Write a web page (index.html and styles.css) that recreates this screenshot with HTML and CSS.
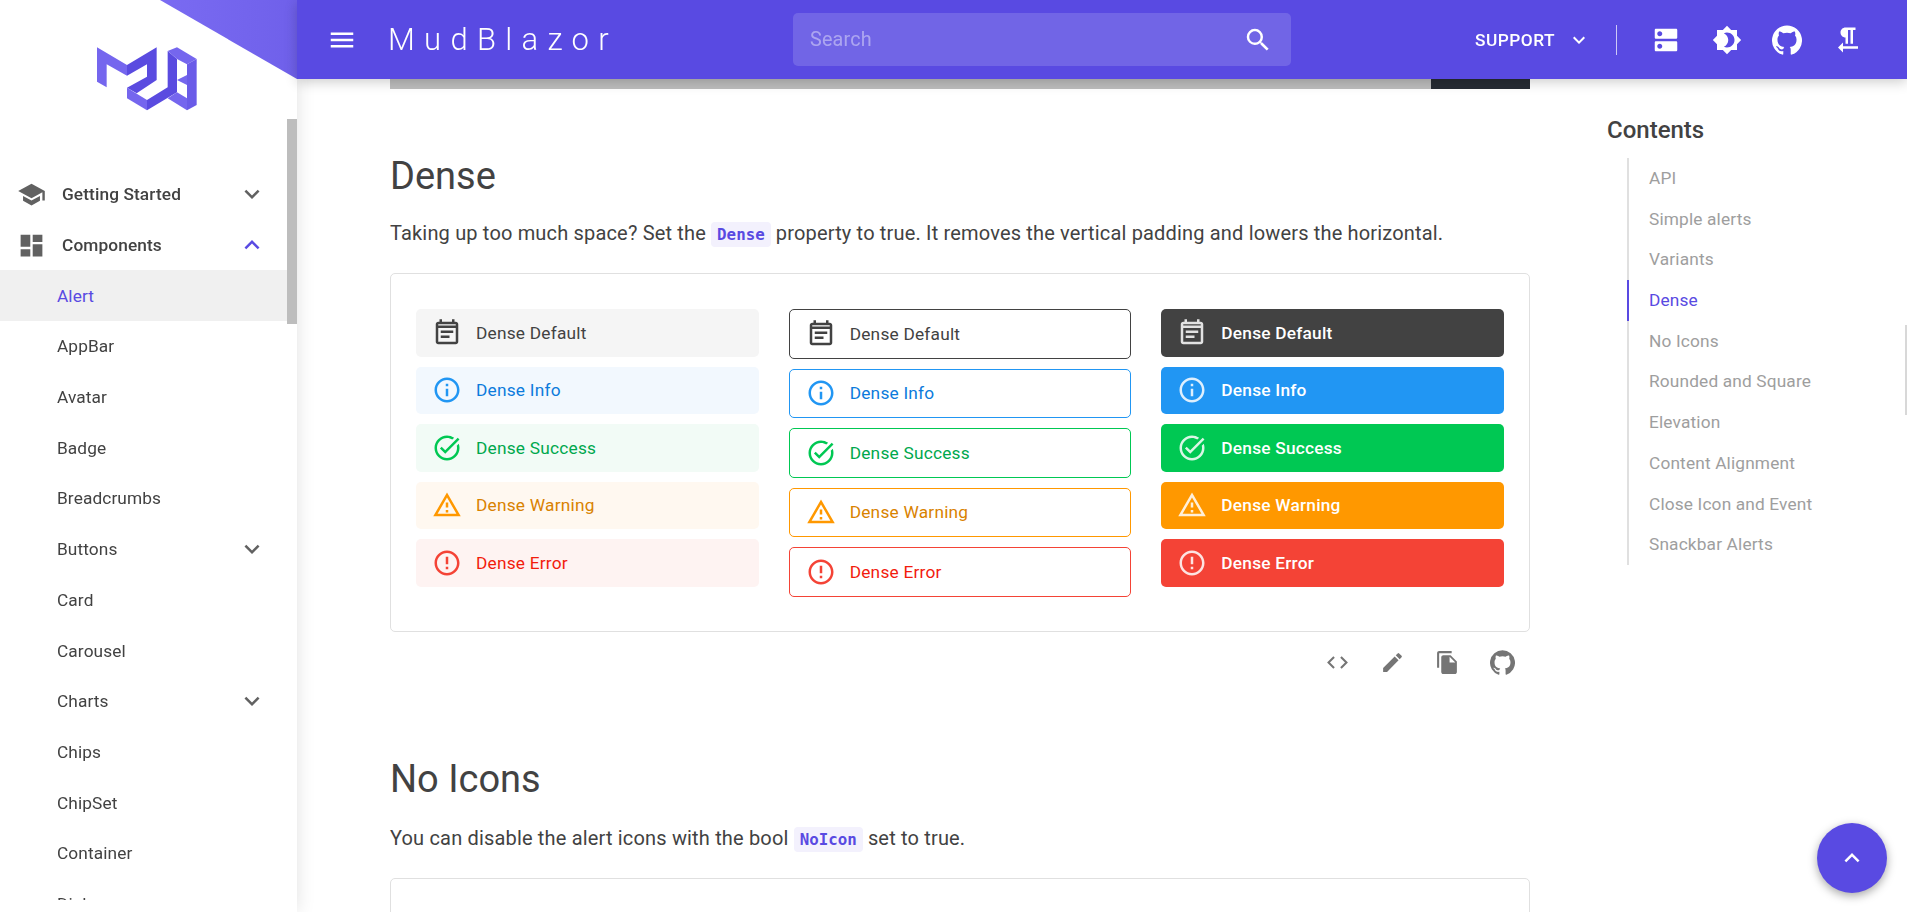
FILE: index.html
```html
<!DOCTYPE html>
<html lang="en">
<head>
    <meta charset="UTF-8">
    <title>Alert - MudBlazor</title>
    <link rel="stylesheet" href="styles.css">
</head>
<body>
    <svg class="defs" width="0" height="0">
        <defs>
            <symbol id="i-note" viewBox="0 0 24 24"><path d="M17 10H7v2h10v-2zm2-7h-1V1h-2v2H8V1H6v2H5c-1.11 0-1.99.9-1.99 2L3 19c0 1.1.89 2 2 2h14c1.1 0 2-.9 2-2V5c0-1.1-.9-2-2-2zm0 16H5V8h14v11zM5 6V5h14v1H5zm2 8h7v2H7v-2z"/></symbol>
            <symbol id="i-info" viewBox="0 0 24 24"><path d="M11 7h2v2h-2zm0 4h2v6h-2zm1-9C6.48 2 2 6.48 2 12s4.48 10 10 10 10-4.48 10-10S17.52 2 12 2zm0 18c-4.41 0-8-3.59-8-8s3.59-8 8-8 8 3.59 8 8-3.59 8-8 8z"/></symbol>
            <symbol id="i-check" viewBox="0 0 24 24"><path d="M22 5.18 10.59 16.6l-4.24-4.24 1.41-1.41 2.83 2.83 10-10L22 5.18zm-2.21 5.04c.13.57.21 1.17.21 1.78 0 4.42-3.58 8-8 8s-8-3.58-8-8 3.58-8 8-8c1.58 0 3.04.46 4.28 1.25l1.44-1.44A9.9 9.9 0 0 0 12 2C6.48 2 2 6.48 2 12s4.48 10 10 10 10-4.48 10-10c0-1.19-.22-2.33-.6-3.39l-1.61 1.61z"/></symbol>
            <symbol id="i-warn" viewBox="0 0 24 24"><path d="M12 5.99 19.53 19H4.47L12 5.99M12 2 1 21h22L12 2zm1 14h-2v2h2v-2zm0-6h-2v4h2v-4z"/></symbol>
            <symbol id="i-error" viewBox="0 0 24 24"><path d="M11 15h2v2h-2zm0-8h2v6h-2zm.99-5C6.47 2 2 6.48 2 12s4.47 10 9.99 10C17.52 22 22 17.52 22 12S17.52 2 11.99 2zM12 20c-4.42 0-8-3.58-8-8s3.58-8 8-8 8 3.58 8 8-3.58 8-8 8z"/></symbol>
            <symbol id="i-github" viewBox="0 0 24 24"><path d="M12 .3a12 12 0 0 0-3.8 23.38c.6.12.83-.26.83-.57l-.01-2.23c-3.34.72-4.04-1.4-4.04-1.4-.55-1.39-1.34-1.76-1.34-1.76-1.08-.74.09-.73.09-.73 1.2.09 1.84 1.24 1.84 1.24 1.07 1.83 2.81 1.3 3.5 1 .1-.78.42-1.31.76-1.61-2.67-.3-5.47-1.33-5.47-5.93 0-1.31.47-2.38 1.24-3.22-.14-.3-.54-1.52.1-3.18 0 0 1-.32 3.3 1.23a11.5 11.5 0 0 1 6 0c2.28-1.55 3.29-1.23 3.29-1.23.64 1.66.24 2.88.12 3.18a4.65 4.65 0 0 1 1.23 3.22c0 4.61-2.8 5.63-5.48 5.92.42.36.81 1.1.81 2.22l-.01 3.29c0 .31.2.69.82.57A12 12 0 0 0 12 .3"/></symbol>
            <symbol id="i-down" viewBox="0 0 24 24"><path d="M7.41 8.59 12 13.17l4.59-4.58L18 10l-6 6-6-6 1.41-1.41z"/></symbol>
            <symbol id="i-up" viewBox="0 0 24 24"><path d="M7.41 15.41 12 10.83l4.59 4.58L18 14l-6-6-6 6z"/></symbol>
        </defs>
    </svg>

    <header class="appbar">
        <svg class="hamburger" viewBox="0 0 24 24"><path d="M3 18h18v-2H3v2zm0-5h18v-2H3v2zm0-7v2h18V6H3z"/></svg>
        <div class="brand">MudBlazor</div>
        <div class="search">
            <span>Search</span>
            <svg viewBox="0 0 24 24"><path d="M15.5 14h-.79l-.28-.27A6.47 6.47 0 0 0 16 9.5 6.5 6.5 0 1 0 9.5 16c1.61 0 3.09-.59 4.23-1.57l.27.28v.79l5 4.99L20.49 19l-4.99-5zm-6 0C7.01 14 5 11.99 5 9.5S7.01 5 9.5 5 14 7.01 14 9.5 11.99 14 9.5 14z"/></svg>
        </div>
        <div class="appbar-right">
            <div class="support">SUPPORT</div>
            <svg class="support-arrow" viewBox="0 0 24 24"><use href="#i-down"/></svg>
            <div class="bar-divider"></div>
            <svg class="bar-icon" viewBox="0 0 24 24"><path d="M20 13H4c-.55 0-1 .45-1 1v6c0 .55.45 1 1 1h16c.55 0 1-.45 1-1v-6c0-.55-.45-1-1-1zM7 19c-1.1 0-2-.9-2-2s.9-2 2-2 2 .9 2 2-.9 2-2 2zM20 3H4c-.55 0-1 .45-1 1v6c0 .55.45 1 1 1h16c.55 0 1-.45 1-1V4c0-.55-.45-1-1-1zM7 9c-1.1 0-2-.9-2-2s.9-2 2-2 2 .9 2 2-.9 2-2 2z"/></svg>
            <svg class="bar-icon" viewBox="0 0 24 24"><path d="M20 8.69V4h-4.69L12 .69 8.69 4H4v4.69L.69 12 4 15.31V20h4.69L12 23.31 15.31 20H20v-4.69L23.31 12 20 8.69zM12 18c-.89 0-1.74-.2-2.5-.55C11.56 16.5 13 14.42 13 12s-1.44-4.5-3.5-5.45C10.26 6.2 11.11 6 12 6c3.31 0 6 2.69 6 6s-2.69 6-6 6z"/></svg>
            <svg class="bar-icon" viewBox="0 0 24 24"><use href="#i-github"/></svg>
            <svg class="bar-icon" viewBox="0 0 24 24"><path d="M10 10v5h2V4h2v11h2V4h2V2h-8C7.79 2 6 3.79 6 6s1.79 4 4 4zm-2 7v-3l-4 4 4 4v-3h12v-2H8z"/></svg>
        </div>
    </header>

    <aside class="sidebar">
        <div class="corner"></div>
        <svg class="logo" viewBox="0 0 360 270">
            <polygon class="logo-light" points="36,37 126,90 126,122 65,88 65,157 36,140"/>
            <polygon class="logo-dark" points="126,90 215,37 215,135 155,175 126,158 186,125 186,88 126,122"/>
            <polygon class="logo-light" points="126,158 186,195 186,226 126,190"/>
            <polygon class="logo-dark" points="186,195 248,157 248,48 276,72 276,172 186,226"/>
            <polygon class="logo-light" points="248,48 276,37 335,72 306,88 276,72"/>
            <polygon class="logo-mid" points="306,88 335,72 335,210 306,226"/>
            <polygon class="logo-light" points="276,135 306,120 306,150"/>
            <polygon class="logo-light" points="276,172 306,190 306,226 248,190"/>
        </svg>
        <div class="nav-wrap">
            <nav class="nav">
                <div class="nav-group">
                    <svg class="nav-icon" viewBox="0 0 24 24"><path d="M5 13.18v4L12 21l7-3.82v-4L12 17l-7-3.82zM12 3 1 9l11 6 9-4.91V17h2V9L12 3z"/></svg>
                    <span>Getting Started</span>
                    <svg class="chev" viewBox="0 0 24 24"><use href="#i-down"/></svg>
                </div>
                <div class="nav-group">
                    <svg class="nav-icon" viewBox="0 0 24 24"><path d="M3 13h8V3H3v10zm0 8h8v-6H3v6zm10 0h8V11h-8v10zm0-18v6h8V3h-8z"/></svg>
                    <span>Components</span>
                    <svg class="chev chev-open" viewBox="0 0 24 24"><use href="#i-up"/></svg>
                </div>
                <div class="nav-item nav-active">Alert</div>
                <div class="nav-item">AppBar</div>
                <div class="nav-item">Avatar</div>
                <div class="nav-item">Badge</div>
                <div class="nav-item">Breadcrumbs</div>
                <div class="nav-item">Buttons<svg class="chev" viewBox="0 0 24 24"><use href="#i-down"/></svg></div>
                <div class="nav-item">Card</div>
                <div class="nav-item">Carousel</div>
                <div class="nav-item">Charts<svg class="chev" viewBox="0 0 24 24"><use href="#i-down"/></svg></div>
                <div class="nav-item">Chips</div>
                <div class="nav-item">ChipSet</div>
                <div class="nav-item">Container</div>
                <div class="nav-item">Dialog</div>
            </nav>
            <div class="nav-thumb"></div>
        </div>
    </aside>

    <div class="page">
        <main class="content">
            <div class="scrolled-code"><div class="scrolled-dark"></div></div>

            <h2 class="title">Dense</h2>
            <p class="desc">Taking up too much space? Set the <code class="chip">Dense</code> property to true. It removes the vertical padding and lowers the horizontal.</p>

            <section class="paper">
                <div class="alert-col">
                    <div class="alert plain-default"><svg viewBox="0 0 24 24"><use href="#i-note"/></svg>Dense Default</div>
                    <div class="alert plain-info"><svg viewBox="0 0 24 24"><use href="#i-info"/></svg>Dense Info</div>
                    <div class="alert plain-success"><svg viewBox="0 0 24 24"><use href="#i-check"/></svg>Dense Success</div>
                    <div class="alert plain-warning"><svg viewBox="0 0 24 24"><use href="#i-warn"/></svg>Dense Warning</div>
                    <div class="alert plain-error"><svg viewBox="0 0 24 24"><use href="#i-error"/></svg>Dense Error</div>
                </div>
                <div class="alert-col">
                    <div class="alert outlined out-default"><svg viewBox="0 0 24 24"><use href="#i-note"/></svg>Dense Default</div>
                    <div class="alert outlined out-info"><svg viewBox="0 0 24 24"><use href="#i-info"/></svg>Dense Info</div>
                    <div class="alert outlined out-success"><svg viewBox="0 0 24 24"><use href="#i-check"/></svg>Dense Success</div>
                    <div class="alert outlined out-warning"><svg viewBox="0 0 24 24"><use href="#i-warn"/></svg>Dense Warning</div>
                    <div class="alert outlined out-error"><svg viewBox="0 0 24 24"><use href="#i-error"/></svg>Dense Error</div>
                </div>
                <div class="alert-col">
                    <div class="alert filled fill-default"><svg viewBox="0 0 24 24"><use href="#i-note"/></svg>Dense Default</div>
                    <div class="alert filled fill-info"><svg viewBox="0 0 24 24"><use href="#i-info"/></svg>Dense Info</div>
                    <div class="alert filled fill-success"><svg viewBox="0 0 24 24"><use href="#i-check"/></svg>Dense Success</div>
                    <div class="alert filled fill-warning"><svg viewBox="0 0 24 24"><use href="#i-warn"/></svg>Dense Warning</div>
                    <div class="alert filled fill-error"><svg viewBox="0 0 24 24"><use href="#i-error"/></svg>Dense Error</div>
                </div>
            </section>

            <div class="tools">
                <svg viewBox="0 0 24 24"><path d="M9.4 16.6 4.8 12l4.6-4.6L8 6l-6 6 6 6 1.4-1.4zm5.2 0 4.6-4.6-4.6-4.6L16 6l6 6-6 6-1.4-1.4z"/></svg>
                <svg viewBox="0 0 24 24"><path d="M3 17.25V21h3.75L17.81 9.94l-3.75-3.75L3 17.25zM20.71 7.04a1 1 0 0 0 0-1.41l-2.34-2.34a1 1 0 0 0-1.41 0l-1.83 1.83 3.75 3.75 1.83-1.83z"/></svg>
                <svg viewBox="0 0 24 24"><path d="M16 1H4c-1.1 0-2 .9-2 2v14h2V3h12V1zm-1 4 6 6v10c0 1.1-.9 2-2 2H7.99C6.89 23 6 22.1 6 21l.01-14c0-1.1.89-2 1.99-2h7zm-1 7h5.5L14 6.5V12z"/></svg>
                <svg viewBox="0 0 24 24"><use href="#i-github"/></svg>
            </div>

            <h2 class="title title-next">No Icons</h2>
            <p class="desc desc-next">You can disable the alert icons with the bool <code class="chip">NoIcon</code> set to true.</p>
            <section class="paper paper-next"></section>
        </main>

        <aside class="toc">
            <div class="toc-title">Contents</div>
            <ul class="toc-list">
                <li>API</li>
                <li>Simple alerts</li>
                <li>Variants</li>
                <li class="toc-active">Dense</li>
                <li>No Icons</li>
                <li>Rounded and Square</li>
                <li>Elevation</li>
                <li>Content Alignment</li>
                <li>Close Icon and Event</li>
                <li>Snackbar Alerts</li>
            </ul>
        </aside>
    </div>

    <div class="page-scroll"></div>
    <button class="fab"><svg viewBox="0 0 24 24"><use href="#i-up"/></svg></button>
</body>
</html>
```

FILE: styles.css
```css
* {
    box-sizing: border-box;
}

html,
body {
    margin: 0;
    height: 100%;
    overflow: hidden;
    background: #fff;
    font-family: Roboto, "Liberation Sans", sans-serif;
    color: #424242;
}

.defs {
    position: absolute;
}

/* top bar */
.appbar {
    position: fixed;
    top: 0;
    left: 297px;
    right: 0;
    height: 79px;
    z-index: 5;
    display: flex;
    align-items: center;
    padding-left: 30px;
    background: #594ae2;
    color: #fff;
    fill: #fff;
    box-shadow: 0 3px 12px rgba(0, 0, 0, .2);
}

.hamburger {
    width: 30px;
    height: 30px;
    flex: none;
}

.brand {
    width: 405px;
    margin-left: 31px;
    font-size: 31px;
    font-weight: 300;
    letter-spacing: 9.3px;
}

.search {
    width: 498px;
    height: 53px;
    display: flex;
    align-items: center;
    justify-content: space-between;
    padding: 0 18px 0 17px;
    border-radius: 5px;
    background: rgba(255, 255, 255, .15);
    font-size: 19.8px;
    letter-spacing: .19px;
    color: rgba(255, 255, 255, .42);
}

.search svg {
    width: 30px;
    height: 30px;
    fill: #fff;
}

.appbar-right {
    display: flex;
    align-items: center;
    margin-left: 184px;
}

.support {
    width: 81px;
    font-size: 17.3px;
    font-weight: 500;
    letter-spacing: .5px;
}

.support-arrow {
    width: 24px;
    height: 24px;
    margin-left: 11px;
}

.bar-divider {
    width: 1px;
    height: 30px;
    margin: 0 34px 0 25px;
    background: rgba(255, 255, 255, .7);
}

.bar-icon {
    width: 30px;
    height: 30px;
    margin-right: 30.5px;
}

/* sidebar */
.sidebar {
    position: fixed;
    top: 0;
    left: 0;
    bottom: 0;
    width: 297px;
    z-index: 4;
    background: #fff;
    box-shadow: 0 0 18px rgba(0, 0, 0, .12);
}

.corner {
    position: absolute;
    top: 0;
    left: 160px;
    width: 137px;
    height: 79px;
    background: linear-gradient(90deg, #7a6bf2, #6f60ea);
    clip-path: polygon(0 0, 100% 0, 100% 100%);
}

.logo {
    position: absolute;
    top: 35px;
    left: 85px;
    width: 120px;
    height: 90px;
}

.logo-light {
    fill: #7566ee;
}

.logo-mid {
    fill: #6a5be8;
}

.logo-dark {
    fill: #5a4be0;
}

.nav-wrap {
    position: absolute;
    top: 119px;
    left: 0;
    right: 0;
    height: 781px;
    overflow: hidden;
}

.nav {
    margin-top: 50px;
    margin-right: 10px;
    font-size: 17.3px;
    letter-spacing: .1px;
}

.nav-thumb {
    position: absolute;
    top: 0;
    right: 0;
    width: 10px;
    height: 205px;
    background: #bdbdbd;
}

.nav-group,
.nav-item {
    display: flex;
    align-items: center;
    height: 50.7px;
    position: relative;
}

.nav-group {
    padding-left: 17px;
    font-weight: 500;
}

.nav-item {
    padding-left: 57px;
}

.nav-active {
    background: #f0f0f0;
    color: #594ae2;
}

.nav-icon {
    width: 29px;
    height: 29px;
    margin-right: 16px;
    fill: #616161;
}

.chev {
    position: absolute;
    left: 237px;
    top: 10px;
    width: 30px;
    height: 30px;
    fill: #616161;
}

.chev-open {
    fill: #594ae2;
}

/* page */
.page {
    display: flex;
    padding: 79px 0 0 390px;
}

.content {
    width: 1140px;
    flex: none;
}

.scrolled-code {
    height: 10px;
    background: #bdbdbd;
    display: flex;
    justify-content: flex-end;
}

.scrolled-dark {
    width: 99px;
    background: #272c34;
}

.title {
    margin: 64px 0 0;
    font-size: 38px;
    line-height: 46px;
    font-weight: 400;
}

.desc {
    margin: 20px 0 0;
    font-size: 20px;
    line-height: 28px;
    letter-spacing: .17px;
    color: #424242;
}

.chip {
    padding: 3px 6px;
    border-radius: 4px;
    background: #f3f1fd;
    color: #594ae2;
    font-family: "DejaVu Sans Mono", "Liberation Mono", monospace;
    font-size: 15.8px;
    font-weight: 700;
    letter-spacing: 0;
}

.paper {
    display: flex;
    gap: 30px;
    height: 359px;
    margin-top: 24px;
    padding: 35px 25px 0 25px;
    border: 1px solid #e0e0e0;
    border-radius: 5px;
}

.alert-col {
    flex: 1;
    display: flex;
    flex-direction: column;
    gap: 10px;
}

.alert {
    height: 47.5px;
    display: flex;
    align-items: center;
    padding-left: 16px;
    border-radius: 5px;
    font-size: 17.3px;
    letter-spacing: .22px;
}

.alert svg {
    width: 30px;
    height: 30px;
    margin-right: 14px;
    fill: currentColor;
}

.outlined {
    height: 49.5px;
    border: 1px solid;
}

.plain-default {
    background: #f5f5f5;
    color: #424242;
}

.plain-info {
    background: #f2f8fe;
    color: #0c7bdc;
}

.plain-info svg {
    fill: #2196f3;
}

.plain-success {
    background: #f2fbf6;
    color: #00a84d;
}

.plain-success svg {
    fill: #00c853;
}

.plain-warning {
    background: #fff8f0;
    color: #d98200;
}

.plain-warning svg {
    fill: #ff9800;
}

.plain-error {
    background: #fef3f2;
    color: #f21c0d;
}

.plain-error svg {
    fill: #f44336;
}

.out-default {
    border-color: #424242;
    color: #424242;
}

.out-info {
    border-color: #2196f3;
    color: #0c7bdc;
}

.out-info svg {
    fill: #2196f3;
}

.out-success {
    border-color: #00c853;
    color: #00a84d;
}

.out-success svg {
    fill: #00c853;
}

.out-warning {
    border-color: #ff9800;
    color: #d98200;
}

.out-warning svg {
    fill: #ff9800;
}

.out-error {
    border-color: #f44336;
    color: #f21c0d;
}

.out-error svg {
    fill: #f44336;
}

.filled {
    color: #fff;
    font-weight: 500;
}

.filled svg {
    fill: #fff;
    opacity: .85;
}

.fill-default {
    background: #424242;
}

.fill-info {
    background: #2196f3;
}

.fill-success {
    background: #00c853;
}

.fill-warning {
    background: #ff9800;
}

.fill-error {
    background: #f44336;
}

.tools {
    display: flex;
    justify-content: flex-end;
    gap: 30px;
    margin-top: 18px;
    padding-right: 15px;
}

.tools svg {
    width: 25px;
    height: 25px;
    fill: #757575;
}

.title-next {
    margin-top: 81px;
}

.desc-next {
    margin-top: 21.5px;
}

.paper-next {
    margin-top: 24px;
}

/* contents list */
.toc {
    margin-left: 77px;
    padding-top: 36px;
}

.toc-title {
    font-size: 24px;
    font-weight: 500;
    line-height: 30px;
}

.toc-list {
    list-style: none;
    margin: 13px 0 0 20px;
    padding: 0;
    border-left: 2px solid #e0e0e0;
}

.toc-list li {
    height: 40.7px;
    line-height: 40.7px;
    margin-left: -2px;
    padding-left: 20px;
    border-left: 2px solid transparent;
    font-size: 17.3px;
    letter-spacing: .15px;
    color: #9e9e9e;
}

.toc-list .toc-active {
    color: #594ae2;
    border-left-color: #594ae2;
}

.page-scroll {
    position: fixed;
    top: 325px;
    right: 0;
    width: 2px;
    height: 90px;
    background: #d8d8d8;
}

.fab {
    position: fixed;
    left: 1817px;
    top: 823px;
    width: 70px;
    height: 70px;
    padding: 20px;
    border: 0;
    border-radius: 50%;
    background: #594ae2;
    fill: #fff;
    box-shadow: 0 3px 10px rgba(0, 0, 0, .35);
}

.fab svg {
    display: block;
    width: 30px;
    height: 30px;
}
```
